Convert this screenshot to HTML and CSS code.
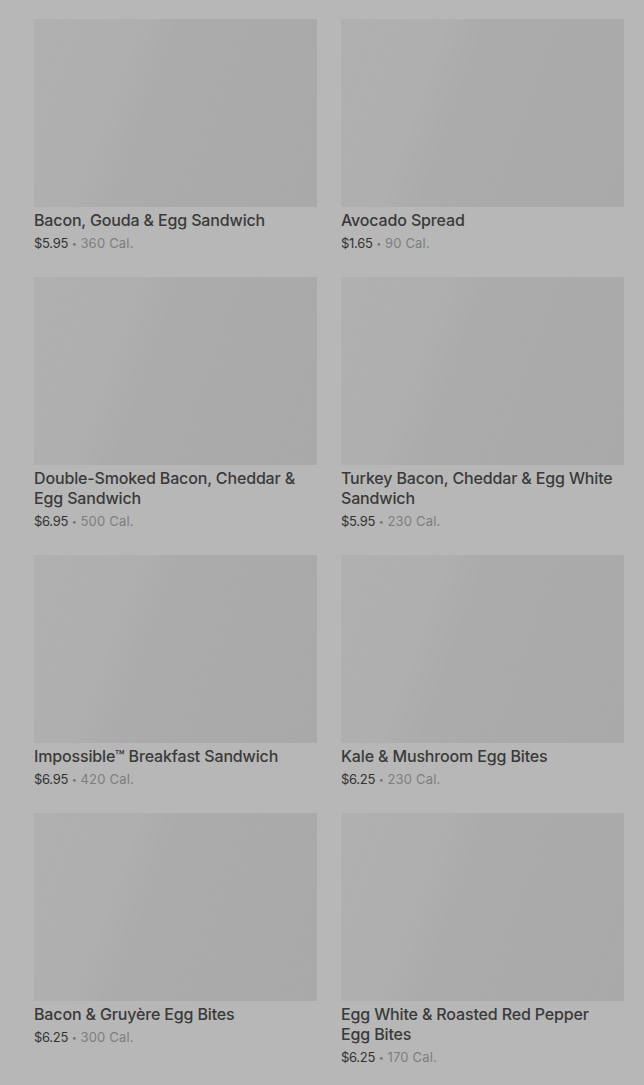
FILE: index.html
```html
<!DOCTYPE html>
<html>
<head>
<meta charset="utf-8">
<link rel="stylesheet" href="styles.css">
</head>
<body>
<main class="grid">
  <div class="card">
    <div class="thumb"></div>
    <div class="title">Bacon, Gouda &amp; Egg Sandwich</div>
    <div class="meta"><span class="price">$5.95</span> <span class="dot">•</span> <span class="cal">360 Cal.</span></div>
  </div>
  <div class="card">
    <div class="thumb"></div>
    <div class="title">Avocado Spread</div>
    <div class="meta"><span class="price">$1.65</span> <span class="dot">•</span> <span class="cal">90 Cal.</span></div>
  </div>
  <div class="card">
    <div class="thumb"></div>
    <div class="title">Double-Smoked Bacon, Cheddar &amp; Egg Sandwich</div>
    <div class="meta"><span class="price">$6.95</span> <span class="dot">•</span> <span class="cal">500 Cal.</span></div>
  </div>
  <div class="card">
    <div class="thumb"></div>
    <div class="title">Turkey Bacon, Cheddar &amp; Egg White Sandwich</div>
    <div class="meta"><span class="price">$5.95</span> <span class="dot">•</span> <span class="cal">230 Cal.</span></div>
  </div>
  <div class="card">
    <div class="thumb"></div>
    <div class="title">Impossible™ Breakfast Sandwich</div>
    <div class="meta"><span class="price">$6.95</span> <span class="dot">•</span> <span class="cal">420 Cal.</span></div>
  </div>
  <div class="card">
    <div class="thumb"></div>
    <div class="title">Kale &amp; Mushroom Egg Bites</div>
    <div class="meta"><span class="price">$6.25</span> <span class="dot">•</span> <span class="cal">230 Cal.</span></div>
  </div>
  <div class="card">
    <div class="thumb"></div>
    <div class="title">Bacon &amp; Gruyère Egg Bites</div>
    <div class="meta"><span class="price">$6.25</span> <span class="dot">•</span> <span class="cal">300 Cal.</span></div>
  </div>
  <div class="card">
    <div class="thumb"></div>
    <div class="title">Egg White &amp; Roasted Red Pepper Egg Bites</div>
    <div class="meta"><span class="price">$6.25</span> <span class="dot">•</span> <span class="cal">170 Cal.</span></div>
  </div>
</main>
</body>
</html>
```
FILE: styles.css
```css
html, body {
  margin: 0;
  padding: 0;
  background: #b7b7b7;
}
body {
  font-family: Inter, "Noto Sans", sans-serif;
  width: 644px;
  height: 1085px;
  overflow: hidden;
}
.grid {
  display: grid;
  grid-template-columns: 283px 283px;
  column-gap: 24px;
  row-gap: 24px;
  padding: 19px 20px 0 34px;
  align-items: start;
}
.card {
  display: flex;
  flex-direction: column;
}
.thumb {
  height: 188px;
  background: linear-gradient(110deg, #b0b0b0 0%, #afafaf 30%, #ababab 42%, #a9a9a9 100%);
}
.title {
  margin-top: 3px;
  padding-right: 6px;
  font-size: 16px;
  line-height: 20px;
  font-weight: 500;
  color: #3a3a3a;
  letter-spacing: -0.15px;
}
.meta {
  margin-top: 3px;
  height: 20px;
  font-size: 13px;
  line-height: 20px;
  color: #333;
}
.price { letter-spacing: -0.3px; }
.dot { font-size: 9px; line-height: 1; color: #777; vertical-align: 1px; }
.cal { color: #7e7e7e; letter-spacing: 0.2px; }
```
